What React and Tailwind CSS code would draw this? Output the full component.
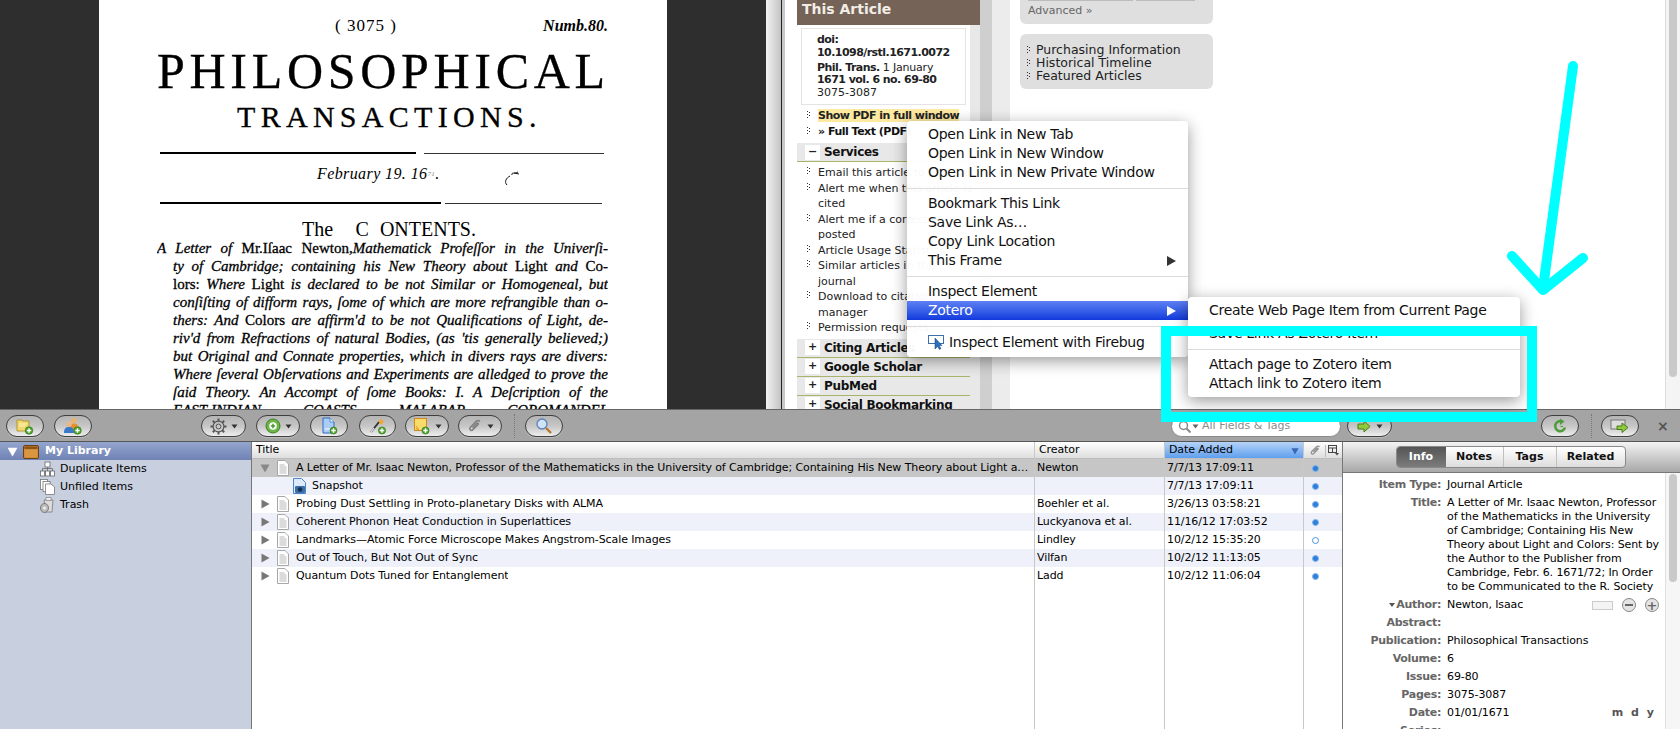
import React from "react";

const Plus = ({ x = 9, y = 10, r = 4 }) => (
  <g>
    <circle cx={x} cy={y} r={r} fill="#4da42c" stroke="#2f6f18" strokeWidth="0.6" />
    <path d={`M${x - 2.2} ${y}h4.4M${x} ${y - 2.2}v4.4`} stroke="#fff" strokeWidth="1.4" />
  </g>
);

const Caret = ({ color = "#333" }) => (
  <svg width="7" height="5" viewBox="0 0 7 5"><path d="M0.5 0.5h6L3.5 4.5z" fill={color} /></svg>
);

const Tri = ({ down = false, color = "#777", size = 10 }) => (
  <svg width={size} height={size} viewBox="0 0 10 10" className="shrink-0">
    {down ? <path d="M0.5 1.5h9L5 9.5z" fill={color} /> : <path d="M1.5 0.5v9L9.5 5z" fill={color} />}
  </svg>
);

const FolderAdd = () => (
  <svg width="18" height="17" viewBox="0 0 18 17">
    <path d="M1 2h5l1 1h6v10H1z" fill="#f2d76a" stroke="#a98a22" strokeWidth="0.8" />
    <path d="M3 6h8M3 8h6" stroke="#fff6c0" strokeWidth="1" />
    <Plus x={13} y={12.5} r={3.8} />
  </svg>
);
const GroupAdd = () => (
  <svg width="20" height="18" viewBox="0 0 20 18">
    <circle cx="11" cy="3.5" r="2.8" fill="#e9b56e" />
    <path d="M7 13c0-5 2-6.500 4-6.500s5 1 5 6.500z" fill="#e8912c" />
    <circle cx="6" cy="7" r="2.800" fill="#e8b78c" />
    <path d="M1 16c0-5 2-6 5-6s5 1 5 6z" fill="#3a79c9" />
    <Plus x={14.500} y={13.500} r={3.800} />
  </svg>
);
const Gear = () => (
  <svg width="17" height="17" viewBox="0 0 17 17" fill="none" stroke="#555">
    <circle cx="8.500" cy="8.500" r="5.400" strokeWidth="1.200" fill="#bdbdbd" fillOpacity="0.300" />
    <circle cx="8.500" cy="8.500" r="2.400" strokeWidth="1" fill="#c8c8c8" />
    <path d="M8.500 .5v2.500M8.500 14v2.500M.5 8.500H3M14 8.500h2.500M2.800 2.800l1.800 1.800M12.400 12.400l1.800 1.800M14.200 2.800l-1.800 1.800M4.600 12.400l-1.800 1.800" strokeWidth="2" />
  </svg>
);
const GreenCircle = () => (
  <svg width="16" height="16" viewBox="0 0 16 16">
    <circle cx="8" cy="8" r="7" fill="#6eb548" stroke="#3f8124" />
    <circle cx="8" cy="8" r="3.800" fill="#fff" />
    <path d="M5.800 8h4.400M8 5.800v4.400" stroke="#4b9a2b" strokeWidth="1.500" />
  </svg>
);
const DocAdd = () => (
  <svg width="17" height="18" viewBox="0 0 17 18">
    <path d="M2 1h7l4 4v11H2z" fill="#a9cdf6" stroke="#2f6fc0" />
    <path d="M9 1v4h4" fill="#e4f0ff" stroke="#2f6fc0" strokeWidth="0.700" />
    <path d="M4 12h5" stroke="#fff" />
    <Plus x={12.500} y={13.500} r={3.500} />
  </svg>
);
const WandAdd = () => (
  <svg width="18" height="18" viewBox="0 0 18 18">
    <path d="M2 15L10 5" stroke="#333" strokeWidth="2" />
    <path d="M2 15L5 11" stroke="#ddd" strokeWidth="1.400" />
    <path d="M12 1l1 2.500 2.500.5-2 1.500.3 2.500-2-1.500-2 1 .8-2.500-1.600-1.500h2.500z" fill="#f1a52a" />
    <Plus x={13} y={13.500} r={3.600} />
  </svg>
);
const NoteAdd = () => (
  <svg width="18" height="18" viewBox="0 0 18 18">
    <rect x="1.500" y="1.500" width="12" height="12" fill="#f8dc6a" stroke="#d28a1f" />
    <path d="M3 9l3 4M3 11l1.500 2" stroke="#d28a1f" strokeWidth="0.800" />
    <Plus x={12.500} y={13.500} r={3.600} />
  </svg>
);
const Clip = ({ w = 16, color = "#7d7d7d" }) => (
  <svg width={w} height={w} viewBox="0 0 16 16" fill="none" className="shrink-0">
    <path d="M13 3.500c-1.300-1.300-2.800-1.300-4 0L3.200 9.500c-1.500 1.700 1 4 2.600 2.300L11 6.500c.8-.8-.4-2-1.300-1.200L5.500 9.700" stroke={color} strokeWidth="1.500" />
  </svg>
);
const Magnifier = () => (
  <svg width="18" height="18" viewBox="0 0 18 18" fill="none">
    <circle cx="7" cy="7" r="5" fill="#cfe2fa" stroke="#5e83b5" strokeWidth="1.300" />
    <path d="M11 11l5 5" stroke="#b4792e" strokeWidth="2.400" />
  </svg>
);
const SmallMag = () => (
  <svg width="13" height="13" viewBox="0 0 13 13" fill="none" className="shrink-0">
    <circle cx="5.500" cy="5.500" r="4" stroke="#8a8a8a" strokeWidth="1.500" />
    <path d="M8.500 8.500l4 4" stroke="#8a8a8a" strokeWidth="2" />
  </svg>
);
const GreenArrow = () => (
  <svg width="15" height="13" viewBox="0 0 15 13">
    <path d="M1 4h6V1l6 5.500-6 5.500V9H1z" fill="#8fc93c" stroke="#4a7d17" />
  </svg>
);
const Sync = () => (
  <svg width="17" height="17" viewBox="0 0 17 17" fill="none">
    <path d="M13 9.500a5 5 0 1 1-3-6" stroke="#4f9d3a" strokeWidth="2.600" />
    <path d="M8 .5l4.500 3L8 7z" fill="#4f9d3a" />
    <path d="M8.500 8.500h2.500" stroke="#4f9d3a" strokeWidth="1.200" />
  </svg>
);
const Fullscreen = () => (
  <svg width="21" height="15" viewBox="0 0 21 15">
    <rect x="1" y="1" width="14" height="9" fill="#ddd" stroke="#777" />
    <path d="M7 7h5V4l6 4.500-6 5v-3H7z" fill="#8fc93c" stroke="#4a7d17" />
  </svg>
);

const DocIcon = () => (
  <svg width="12" height="16" viewBox="0 0 12 16" className="shrink-0">
    <path d="M.5.500h7.500l3.500 3.500v11.500H.5z" fill="#fff" stroke="#a8a8a8" />
    <path d="M2.500 5h5M2.500 7h7M2.500 9h7M2.500 11h7M2.500 13h7" stroke="#a5a5a5" strokeWidth="0.800" />
  </svg>
);
const SnapIcon = () => (
  <svg width="15" height="16" viewBox="0 0 15 16" className="shrink-0">
    <path d="M1.500.5h8l4 4v11h-12z" fill="#dcebfb" stroke="#4d86c9" />
    <rect x="3" y="8" width="10" height="7" rx="1" fill="#3c6ea8" />
    <circle cx="8" cy="11.500" r="2.300" fill="#16304f" />
  </svg>
);
const FolderBrown = () => (
  <svg width="16" height="14" viewBox="0 0 16 14" className="shrink-0">
    <rect x="0.500" y="0.500" width="15" height="13" rx="1.500" fill="#c98432" stroke="#6e3f10" />
    <rect x="1.500" y="1.500" width="13" height="2.500" fill="#6e3f10" opacity="0.700" />
    <rect x="1.500" y="4.500" width="13" height="8" fill="#d9953f" />
  </svg>
);
const DupIcon = () => (
  <svg width="15" height="16" viewBox="0 0 15 16" className="shrink-0" fill="#fff" stroke="#666" strokeWidth="0.800">
    <rect x="5" y="1" width="5" height="5" />
    <path d="M2.500 10V7.500h10V10M7.500 6v4" fill="none" />
    <rect x="0.500" y="10" width="4" height="5" />
    <rect x="5.500" y="10" width="4" height="5" />
    <rect x="10.500" y="10" width="4" height="5" />
  </svg>
);
const UnfiledIcon = () => (
  <svg width="15" height="16" viewBox="0 0 15 16" className="shrink-0" fill="#fff" stroke="#777" strokeWidth="0.800">
    <rect x="0.500" y="0.500" width="7" height="10" />
    <rect x="3" y="2.500" width="7" height="10" />
    <path d="M5.500 5h5.500l3.500 3v7.500H5.500z" />
  </svg>
);
const TrashIcon = () => (
  <svg width="15" height="16" viewBox="0 0 15 16" className="shrink-0">
    <path d="M4 3h9l-1 12H6z" fill="#dcdcdc" stroke="#7a7a7a" strokeWidth="0.800" />
    <ellipse cx="4.500" cy="11" rx="4" ry="4.500" fill="#bcbcbc" stroke="#666" strokeWidth="0.800" />
    <circle cx="4.500" cy="11" r="1.500" fill="#efefef" />
    <rect x="6" y="0.500" width="5" height="3" fill="#eee" stroke="#888" strokeWidth="0.700" />
  </svg>
);
const Dots = () => (
  <svg width="5" height="8" viewBox="0 0 5 8" className="shrink-0" fill="#333">
    <rect x="1" y="0" width="1" height="1" /><rect x="3" y="1" width="1" height="1" />
    <rect x="1" y="3" width="1" height="1" /><rect x="3" y="4" width="1" height="1" />
    <rect x="1" y="6" width="1" height="1" />
  </svg>
);

const Btn = ({ w, ml, children }) => (
  <div
    style={{ width: w, marginLeft: ml }}
    className="h-[22px] shrink-0 rounded-full border border-[#3f3f3f] bg-gradient-to-b from-[#b4b4b4] via-[#c6c6c6] to-[#eeeeee] shadow-[0_1px_0_rgba(255,255,255,0.25)] flex items-center justify-center gap-[4px]"
  >
    {children}
  </div>
);

const PdfLine = ({ children, first }) => (
  <div className={`h-[18px] overflow-hidden leading-[18px] text-[15px] [text-align-last:justify] ${first ? "" : "ml-[16px]"}`}>
    {children}
  </div>
);

const I = ({ children }) => <i>{children}</i>;

const PdfPage = () => (
  <div className="w-[568px] h-full bg-white overflow-hidden pl-[58px] pr-[59px] text-black font-['Liberation_Serif',serif]">
    <div className="flex justify-between h-[20px] mt-[16px] pl-[178px] items-center">
      <span className="text-[17px] tracking-[1px]">( 3075 )</span>
      <span className="italic font-bold text-[16px]">Numb.80.</span>
    </div>
    <div className="h-[50px] mt-[10px] leading-[50px] text-[50px] tracking-[4.7px] whitespace-nowrap overflow-hidden [-webkit-text-stroke:0.3px_black]">PHILOSOPHICAL</div>
    <div className="h-[30px] mt-[6px] ml-[80px] w-[310px] leading-[30px] text-[30px] tracking-[5.300px] whitespace-nowrap overflow-hidden [-webkit-text-stroke:0.3px_black]">TRANSACTIONS.</div>
    <div className="flex items-center mt-[20px] ml-[3px] gap-[8px] h-[2px]">
      <div className="w-[256px] h-[2px] bg-black"></div>
      <div className="w-[180px] h-px bg-[#333]"></div>
    </div>
    <div className="flex h-[20px] mt-[10px] ml-[160px] items-center leading-[20px]">
      <span className="italic text-[16px] tracking-[0.4px]">February 19. 16<sup className="text-[7px] text-[#888]">71</sup>.</span>
      <svg width="20" height="18" viewBox="0 0 20 18" className="ml-[62px] mt-[10px]" fill="none" stroke="#111" strokeWidth="1"><path d="M16 2c-3 2-7 0-6 3M8 6C4 8 2 12 5 15M12 3l5 1" /></svg>
    </div>
    <div className="flex items-center mt-[18px] ml-[3px] gap-[4px] h-[2px]">
      <div className="w-[281px] h-[2px] bg-black"></div>
      <div className="w-[157px] h-px bg-[#333]"></div>
    </div>
    <div className="h-[24px] mt-[13px] ml-[145px] w-[174px] leading-[24px] text-[20px] [text-align-last:justify] overflow-hidden">The &nbsp;C ONTENTS.</div>
    <div className="-mt-[2px] [-webkit-text-stroke:0.3px_black]">
      <PdfLine first><I>A Letter of</I> Mr.Iſaac Newton,<I>Mathematick Profeſſor in the Univerſi-</I></PdfLine>
      <PdfLine><I>ty of Cambridge; containing his New Theory about</I> Light <I>and</I> Co-</PdfLine>
      <PdfLine>lors: <I>Where</I> Light <I>is declared to be not Similar or Homogeneal, but</I></PdfLine>
      <PdfLine><I>conſiſting of difform rays, ſome of which are more refrangible than o-</I></PdfLine>
      <PdfLine><I>thers: And</I> Colors <I>are affirm'd to be not Qualifications of Light, de-</I></PdfLine>
      <PdfLine><I>riv'd from Refractions of natural Bodies, (as 'tis generally believed;)</I></PdfLine>
      <PdfLine><I>but Original and Connate properties, which in divers rays are divers:</I></PdfLine>
      <PdfLine><I>Where ſeveral Obſervations and Experiments are alledged to prove the</I></PdfLine>
      <PdfLine><I>ſaid Theory. An Accompt of ſome Books: I. A Deſcription of the</I></PdfLine>
      <PdfLine><I>EAST-INDIAN COASTS MALABAR COROMANDEL</I></PdfLine>
    </div>
  </div>
);

const SideItem = ({ lines }) => (
  <div className="flex">
    <div className="w-[21px] shrink-0 pl-[9px] pt-[2px]"><Dots /></div>
    <div className="text-[11px] leading-[15.500px] text-[#222] whitespace-nowrap">
      {lines.map((l) => <div key={l}>{l}</div>)}
    </div>
  </div>
);

const SideHead = ({ sign, title, className = "" }) => (
  <div className={`h-[19px] bg-[#e8e8e8] border-b border-[#a9b36a] flex items-center w-[173px] pl-[8px] ${className}`}>
    <div className="w-[15px] h-[15px] shrink-0 bg-white flex items-center justify-center text-[11px] font-bold text-[#222] mr-[4px]">{sign}</div>
    <span className="text-[12px] font-bold tracking-[-0.3px] text-[#111] whitespace-nowrap">{title}</span>
  </div>
);

const Sidebar = () => (
  <div className="w-[183px] h-full bg-[#e8e8e8] overflow-hidden relative">
    <div className="h-[25px] bg-[#746356] pl-[5px] text-[14px] leading-[18px] font-semibold text-[#f2ece6]">This Article</div>
    <div className="w-[173px] bg-white h-[384px]">
      <div className="pl-[4px] pt-[3px]">
        <div className="w-[165px] h-[77px] border border-[#e4e4e4] pl-[15px] pt-[3px] font-bold text-[11px] tracking-[-0.55px] text-[#222] whitespace-nowrap">
          <div className="leading-[13px] pt-[1px]">doi:</div>
          <div className="leading-[13px]">10.1098/rstl.1671.0072</div>
          <div className="leading-[13px] mt-[2px] font-normal tracking-[-0.2px]"><b className="tracking-[-0.55px]">Phil. Trans.</b> 1 January</div>
          <div className="leading-[12.500px]">1671 vol. 6 no. 69-80</div>
          <div className="leading-[12px] font-normal tracking-normal">3075-3087</div>
        </div>
      </div>
      <div className="flex h-[16px] mt-[2px] items-center">
        <div className="w-[21px] shrink-0 pl-[9px]"><Dots /></div>
        <span className="bg-[#fde9a0] h-[13px] leading-[13px] text-[11px] font-bold tracking-[-0.5px] text-[#222] whitespace-nowrap">Show PDF in full window</span>
      </div>
      <div className="flex h-[16px] items-center">
        <div className="w-[21px] shrink-0 pl-[9px]"><Dots /></div>
        <span className="leading-[13px] text-[11px] font-bold tracking-[-0.5px] text-[#111] whitespace-nowrap">» Full Text (PDF)</span>
      </div>
      <SideHead sign="−" title="Services" className="mt-[4px]" />
      <div className="pt-[3px]">
        <SideItem lines={["Email this article to a friend"]} />
        <SideItem lines={["Alert me when this article is", "cited"]} />
        <SideItem lines={["Alert me if a correction is", "posted"]} />
        <SideItem lines={["Article Usage Statistics"]} />
        <SideItem lines={["Similar articles in this", "journal"]} />
        <SideItem lines={["Download to citation", "manager"]} />
        <SideItem lines={["Permission requests"]} />
      </div>
      <SideHead sign="+" title="Citing Articles" className="mt-[3px]" />
      <SideHead sign="+" title="Google Scholar" />
      <SideHead sign="+" title="PubMed" />
      <SideHead sign="+" title="Social Bookmarking" />
    </div>
  </div>
);

const MI = ({ children, arrow, active, className = "" }) => (
  <div className={`h-[19px] leading-[19px] flex items-center justify-between ${active ? "bg-gradient-to-b from-[#5f80f4] to-[#1238dc] text-white" : "text-[#111]"} ${className}`}>
    <span className="pl-[21px] text-[14px] whitespace-nowrap tracking-[-0.29px]">{children}</span>
    {arrow && <svg width="9" height="10" viewBox="0 0 9 10" className="mr-[12px] shrink-0"><path d="M0 0l9 5-9 5z" fill={active ? "#fff" : "#333"} /></svg>}
  </div>
);
const Sep = ({ className = "" }) => (
  <div className={`h-[12px] flex items-center ${className}`}><div className="h-px w-full bg-[#dcdcdc]"></div></div>
);

const ContextMenu = () => (
  <div className="absolute left-[907px] top-[121px] w-[281px] h-[236px] bg-white/[0.97] rounded-[4px] py-[4px] shadow-[0_4px_16px_rgba(0,0,0,0.4)]">
    <MI>Open Link in New Tab</MI>
    <MI>Open Link in New Window</MI>
    <MI>Open Link in New Private Window</MI>
    <Sep />
    <MI>Bookmark This Link</MI>
    <MI>Save Link As…</MI>
    <MI>Copy Link Location</MI>
    <MI arrow>This Frame</MI>
    <Sep />
    <MI>Inspect Element</MI>
    <MI arrow active>Zotero</MI>
    <Sep />
    <div className="h-[20px] flex items-center pl-[21px] gap-[5px]">
      <svg width="16" height="15" viewBox="0 0 16 15" className="shrink-0">
        <rect x="0.500" y="0.500" width="15" height="8" fill="#fff" stroke="#3f6fa8" />
        <path d="M7 3v11l2.500-2.500 2 3 1.500-1-2-3h3z" fill="#2b6fc0" stroke="#123f78" strokeWidth="0.500" />
      </svg>
      <span className="text-[14px] tracking-[-0.29px] whitespace-nowrap text-[#111]">Inspect Element with Firebug</span>
    </div>
  </div>
);

const SubMenu = () => (
  <div className="absolute left-[1188px] top-[297px] w-[332px] h-[100px] bg-white rounded-[4px] pt-[4px] shadow-[0_4px_16px_rgba(0,0,0,0.4)]">
    <MI>Create Web Page Item from Current Page</MI>
    <MI className="mt-[4px]">Save Link As Zotero Item</MI>
    <Sep />
    <MI>Attach page to Zotero item</MI>
    <MI>Attach link to Zotero item</MI>
  </div>
);

const Annotation = () => (
  <svg width="1680" height="729" viewBox="0 0 1680 729" className="absolute left-0 top-0 pointer-events-none" fill="none" stroke="#00ffff" strokeWidth="10" strokeLinecap="round" strokeLinejoin="round">
    <rect x="1166" y="331" width="366" height="86" strokeLinejoin="miter" />
    <path d="M1573 66L1543 288" />
    <path d="M1512 256L1543 290L1583 258" />
  </svg>
);

const rows = [
  { sel: true, open: true, title: "A Letter of Mr. Isaac Newton, Professor of the Mathematicks in the University of Cambridge; Containing His New Theory about Light an…", creator: "Newton", date: "7/7/13 17:09:11" },
  { child: true, title: "Snapshot", creator: "", date: "7/7/13 17:09:11" },
  { title: "Probing Dust Settling in Proto-planetary Disks with ALMA", creator: "Boehler et al.", date: "3/26/13 03:58:21" },
  { title: "Coherent Phonon Heat Conduction in Superlattices", creator: "Luckyanova et al.", date: "11/16/12 17:03:52" },
  { title: "Landmarks—Atomic Force Microscope Makes Angstrom-Scale Images", creator: "Lindley", date: "10/2/12 15:35:20", hollow: true },
  { title: "Out of Touch, But Not Out of Sync", creator: "Vilfan", date: "10/2/12 11:13:05" },
  { title: "Quantum Dots Tuned for Entanglement", creator: "Ladd", date: "10/2/12 11:06:04" },
];
const rowBg = (i) => (i === 0 ? "bg-[#c6c6c6]" : i % 2 === 1 ? "bg-[#eef1fa]" : "bg-white");

const HEAD_GRAY = "bg-gradient-to-b from-white to-[#dedede]";
const HEAD_BLUE = "bg-gradient-to-b from-[#b5d3f7] to-[#5f9fee]";

const Head = ({ children, className = "", tone = HEAD_GRAY }) => (
  <div className={`h-[17px] pt-[1px] border-b border-[#bdbdbd] flex items-center text-[11px] text-black ${tone} ${className}`}>{children}</div>
);

const ItemList = () => (
  <div className="w-[1090px] h-full flex text-[11px] tracking-[-0.1px] text-black whitespace-nowrap">
    <div className="w-[783px] h-full border-r border-[#c8c8c8] overflow-hidden">
      <Head className="pl-[4px]">Title</Head>
      {rows.map((r, i) => (
        <div key={r.title} className={`h-[18px] flex items-center ${rowBg(i)}`}>
          {r.child ? (
            <div className="flex items-center pl-[40px] gap-[5px]"><SnapIcon /><span>{r.title}</span></div>
          ) : (
            <div className="flex items-center pl-[8px] w-full">
              <Tri down={r.open} color={r.sel ? "#888" : "#777"} />
              <div className="ml-[7px] mr-[7px]"><DocIcon /></div>
              <span className="truncate">{r.title}</span>
            </div>
          )}
        </div>
      ))}
    </div>
    <div className="w-[130px] h-full border-r border-[#c8c8c8]">
      <Head className="pl-[4px]">Creator</Head>
      {rows.map((r, i) => (
        <div key={r.title} className={`h-[18px] leading-[18px] pl-[2px] ${rowBg(i)}`}>{r.creator}</div>
      ))}
    </div>
    <div className="w-[139px] h-full border-r border-[#c8c8c8]">
      <Head className="pl-[4px] justify-between pr-[4px]" tone={HEAD_BLUE}>
        <span>Date Added</span><Tri down color="#3a66b8" size={8} />
      </Head>
      {rows.map((r, i) => (
        <div key={r.title} className={`h-[18px] leading-[18px] pl-[2px] ${rowBg(i)}`}>{r.date}</div>
      ))}
    </div>
    <div className="w-[38px] h-full">
      <Head className="pl-[5px]">
        <Clip w={13} color="#8f8f8f" />
        <div className="w-px h-[12px] bg-[#bbb] ml-[3px] mr-[2px]"></div>
        <svg width="11" height="11" viewBox="0 0 11 11" fill="none" stroke="#444" className="shrink-0"><rect x="0.500" y="0.500" width="8" height="7" /><path d="M.5 3h8M4.500 3v5" /><path d="M7 8h4l-2 2.500z" fill="#444" stroke="none" /></svg>
      </Head>
      {rows.map((r, i) => (
        <div key={r.title} className={`h-[18px] flex items-center pl-[8px] ${rowBg(i)}`}>
          {r.hollow ? (
            <div className="w-[7px] h-[7px] rounded-full border border-[#4a93e0]"></div>
          ) : (
            <div className="w-[7px] h-[7px] rounded-full bg-[#2f7fd8] border border-[#7fb5ee]"></div>
          )}
        </div>
      ))}
    </div>
  </div>
);

const Tab = ({ children, w, active, last }) => (
  <div
    style={{ width: w }}
    className={`h-full flex items-center justify-center text-[11px] font-bold ${active ? "bg-gradient-to-b from-[#555] to-[#7c7c7c] text-white" : "text-[#111]"} ${!active && !last ? "border-r border-[#c0c0c0]" : ""}`}
  >
    {children}
  </div>
);

const Info = ({ label, children, arrow, right }) => (
  <div className="flex">
    <div className="w-[98px] shrink-0 h-[18px] flex items-center justify-end text-[11px] font-bold tracking-[-0.3px] text-[#666] whitespace-nowrap">
      {arrow && <svg width="6" height="4" viewBox="0 0 6 4" className="mr-[1px]"><path d="M0 0h6L3 4z" fill="#555" /></svg>}
      {label}
    </div>
    <div className="ml-[6px] flex-1 flex justify-between text-[11px] tracking-[-0.1px] leading-[18px] text-black whitespace-nowrap">
      {children}
      {right}
    </div>
  </div>
);

const RightPane = () => (
  <div className="flex-1 h-full border-l border-[#777] flex flex-col min-w-0">
    <div className="h-[31px] shrink-0 border-b border-[#777] bg-gradient-to-b from-[#f4f4f4] to-[#a8a8a8] flex justify-center items-start pt-[4px] pr-[2px]">
      <div className="h-[22px] w-[230px] rounded-[4px] border border-[#8a8a8a] bg-gradient-to-b from-white to-[#dddddd] flex overflow-hidden">
        <Tab w={49} active>Info</Tab>
        <Tab w={58}>Notes</Tab>
        <Tab w={53}>Tags</Tab>
        <Tab w={68} last>Related</Tab>
      </div>
    </div>
    <div className="flex-1 flex min-h-0">
      <div className="flex-1 pt-[3px] overflow-hidden">
        <Info label="Item Type:">Journal Article</Info>
        <div className="flex">
          <div className="w-[98px] shrink-0 h-[18px] flex items-center justify-end text-[11px] font-bold tracking-[-0.3px] text-[#666]">Title:</div>
          <div className="ml-[6px] pt-[2px] mb-[2px] text-[11px] tracking-[-0.1px] leading-[14px] text-black whitespace-nowrap">
            <div>A Letter of Mr. Isaac Newton, Professor</div>
            <div>of the Mathematicks in the University</div>
            <div>of Cambridge; Containing His New</div>
            <div>Theory about Light and Colors: Sent by</div>
            <div>the Author to the Publisher from</div>
            <div>Cambridge, Febr. 6. 1671/72; In Order</div>
            <div>to be Communicated to the R. Society</div>
          </div>
        </div>
        <Info label="Author:" arrow right={
          <div className="flex items-center gap-[9px] pr-[6px]">
            <div className="w-[21px] h-[9px] border border-[#ccc] bg-[#f4f4f4]"></div>
            <div className="w-[14px] h-[14px] rounded-full border border-[#888] bg-[#e4e4e4] flex items-center justify-center"><div className="w-[8px] h-[2px] bg-[#666]"></div></div>
            <div className="w-[14px] h-[14px] rounded-full border border-[#888] bg-[#e4e4e4] flex items-center justify-center text-[13px] leading-none font-bold text-[#666]">+</div>
          </div>
        }>Newton, Isaac</Info>
        <Info label="Abstract:"></Info>
        <Info label="Publication:">Philosophical Transactions</Info>
        <Info label="Volume:">6</Info>
        <Info label="Issue:">69-80</Info>
        <Info label="Pages:">3075-3087</Info>
        <Info label="Date:" right={<span className="font-bold text-[#555] pr-[9px] tracking-[2px]">m d y</span>}>01/01/1671</Info>
        <Info label="Series:"></Info>
      </div>
      <div className="w-[15px] shrink-0 h-full bg-[#f6f6f6] border-l border-[#e0e0e0] pl-[3px] pt-[1px]">
        <div className="w-[8px] h-[108px] rounded-full bg-[#c9c9c9]"></div>
      </div>
    </div>
  </div>
);

export default function App() {
  return (
    <div className="relative w-[1680px] h-[729px] overflow-hidden bg-white font-['DejaVu_Sans',sans-serif]">
      <div className="h-[409px] flex overflow-hidden">
        <div className="w-[766px] h-full flex justify-center bg-[#2e2e2e]"><PdfPage /></div>
        <div className="w-[15px] h-full bg-gradient-to-r from-[#f2f2f2] to-[#c4c4c4]"></div>
        <div className="w-px h-full bg-[#222]"></div>
        <div className="w-[3px] h-full bg-[#c8c8c8]"></div>
        <div className="w-[12px] h-full bg-white"></div>
        <Sidebar />
        <div className="w-[12px] h-full bg-[#cfcfcf]"></div>
        <div className="w-[18px] h-full bg-[#ececec]"></div>
        <div className="w-[10px] h-full bg-white"></div>
        <div className="w-[193px] h-full">
          <div className="h-[24px] bg-[#dfdfdf] rounded-b-[6px] pl-[8px] text-[11px] text-[#666] flex flex-col">
            <div className="flex gap-[3px] h-px"><div className="w-[105px] bg-[#bbb]"></div><div className="w-[59px] bg-[#bbb]"></div></div>
            <div className="mt-[3px] leading-[14px]">Advanced »</div>
          </div>
          <div className="h-[55px] mt-[10px] bg-[#dfdfdf] rounded-[6px] pt-[9px] pl-[6px] text-[12.500px] leading-[13px] text-[#222]">
            <div className="flex items-center gap-[5px]"><Dots /><span>Purchasing Information</span></div>
            <div className="flex items-center gap-[5px]"><Dots /><span>Historical Timeline</span></div>
            <div className="flex items-center gap-[5px]"><Dots /><span>Featured Articles</span></div>
          </div>
        </div>
        <div className="flex-1"></div>
        <div className="w-[15px] h-full bg-[#f4f4f4] border-l border-[#dddddd] pl-[3px]">
          <div className="w-[8px] h-[377px] rounded-b-full bg-[#c9c9c9]"></div>
        </div>
      </div>

      <div className="h-[33px] bg-[#a4a4a4] border-t border-[#666] border-b border-b-[#555] flex items-center pt-[1px]">
        <Btn w={38} ml={6}><FolderAdd /></Btn>
        <Btn w={38} ml={10}><GroupAdd /></Btn>
        <Btn w={45} ml={109}><Gear /><Caret /></Btn>
        <Btn w={44} ml={10}><GreenCircle /><Caret /></Btn>
        <Btn w={38} ml={10}><DocAdd /></Btn>
        <Btn w={37} ml={11}><WandAdd /></Btn>
        <Btn w={44} ml={9}><NoteAdd /><Caret /></Btn>
        <Btn w={44} ml={9}><Clip /><Caret /></Btn>
        <div className="w-0 h-[24px] ml-[12px] border-l border-dotted border-[#777]"></div>
        <Btn w={38} ml={10}><Magnifier /></Btn>
        <div className="ml-[608px] w-[170px] h-[21px] shrink-0 rounded-full bg-white border border-[#8a8a8a] flex items-center pl-[6px] gap-[1px] text-[11px] text-[#8a8a8a]">
          <SmallMag /><Caret color="#666" /><span className="ml-[2px] whitespace-nowrap">All Fields &amp; Tags</span>
        </div>
        <Btn w={45} ml={6}><GreenArrow /><Caret /></Btn>
        <Btn w={38} ml={149}><Sync /></Btn>
        <div className="w-0 h-[24px] ml-[12px] border-l border-dotted border-[#777]"></div>
        <Btn w={38} ml={9}><Fullscreen /></Btn>
        <span className="ml-[18px] text-[14px] font-bold text-[#555] leading-none">×</span>
      </div>

      <div className="h-[287px] flex">
        <div className="w-[252px] h-full bg-[#c8cfde] border-r border-[#777] shrink-0 text-[11px] text-black">
          <div className="h-[18px] pt-[1px] bg-gradient-to-b from-[#94a5cd] to-[#6f82b4] flex items-center pl-[7px] text-white font-bold">
            <Tri down color="#fff" size={11} />
            <div className="ml-[5px] mr-[6px]"><FolderBrown /></div>
            <span>My Library</span>
          </div>
          <div className="h-[18px] flex items-center pl-[40px] gap-[5px]"><DupIcon /><span>Duplicate Items</span></div>
          <div className="h-[18px] flex items-center pl-[40px] gap-[5px]"><UnfiledIcon /><span>Unfiled Items</span></div>
          <div className="h-[18px] flex items-center pl-[40px] gap-[5px]"><TrashIcon /><span>Trash</span></div>
        </div>
        <ItemList />
        <RightPane />
      </div>

      <ContextMenu />
      <SubMenu />
      <Annotation />
    </div>
  );
}
